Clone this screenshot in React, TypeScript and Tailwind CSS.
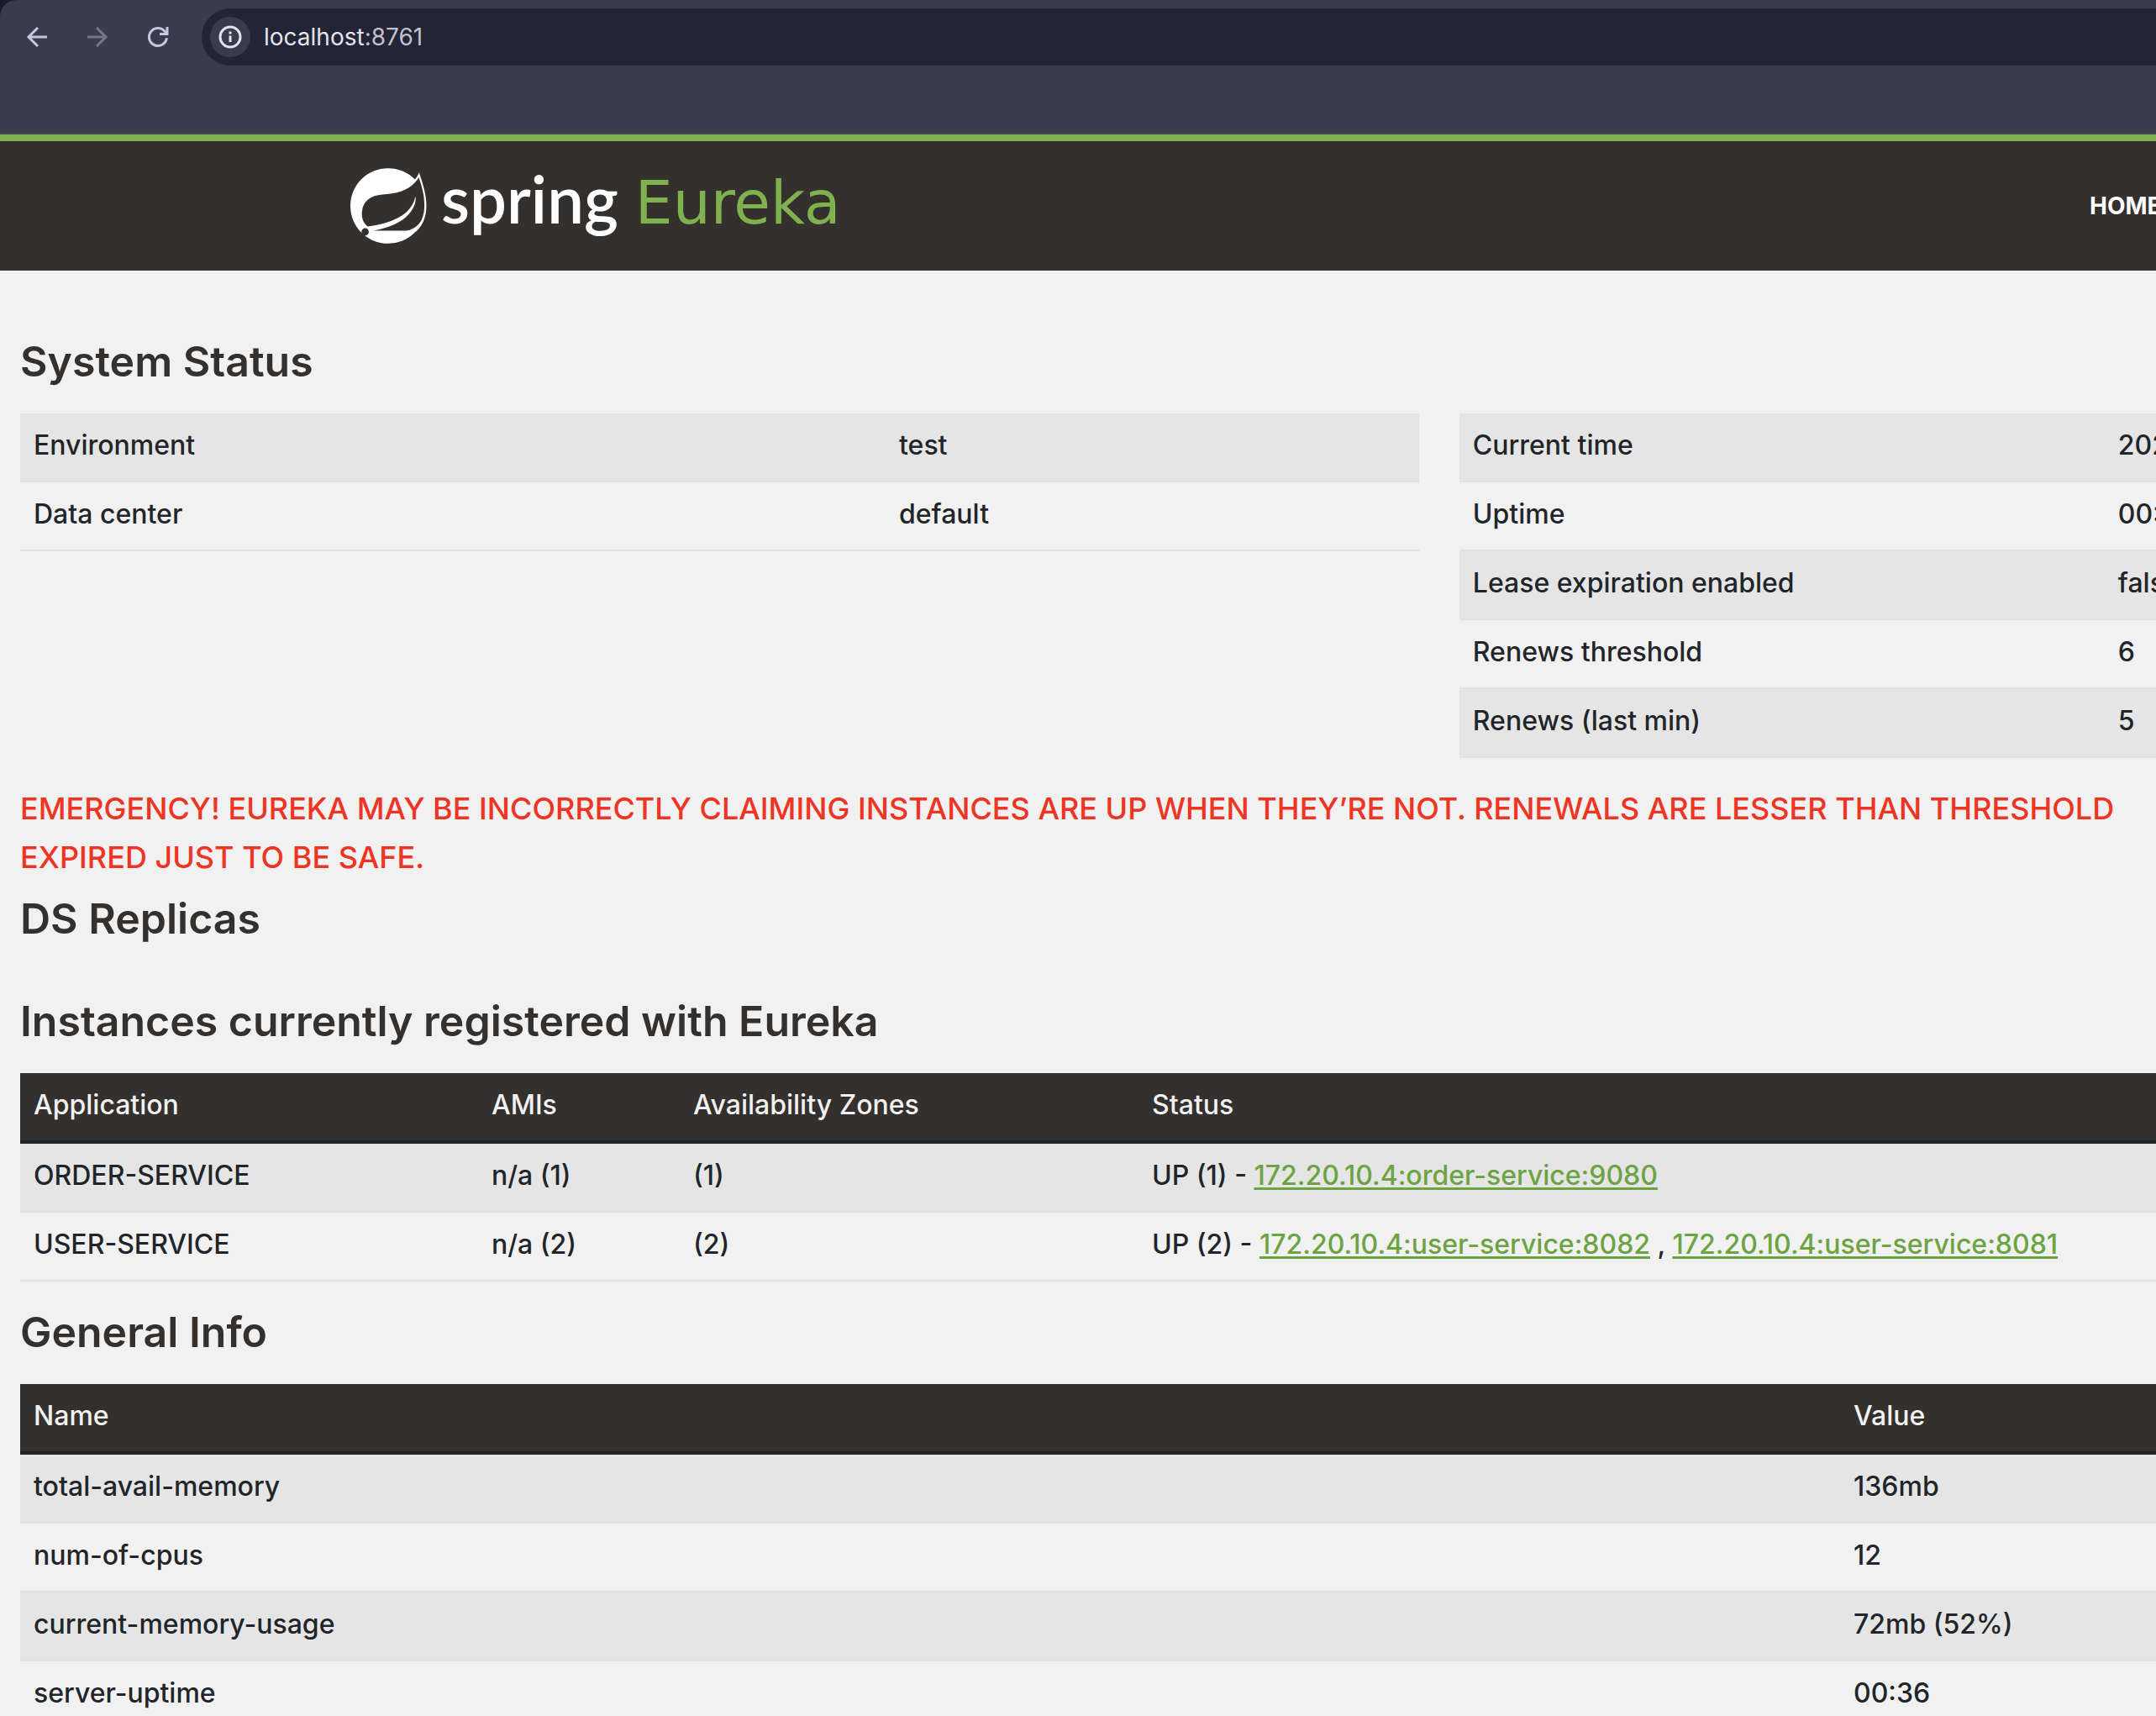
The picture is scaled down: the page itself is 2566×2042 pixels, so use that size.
import type { ReactNode } from 'react';

type Service = { name: string; amis: string; zones: string; status: string; links: string[] };

const ENVIRONMENT: [string, string][] = [
  ['Environment', 'test'],
  ['Data center', 'default'],
];

const RUNTIME: [string, string][] = [
  ['Current time', '2024'],
  ['Uptime', '00:36'],
  ['Lease expiration enabled', 'false'],
  ['Renews threshold', '6'],
  ['Renews (last min)', '5'],
];

const SERVICES: Service[] = [
  { name: 'ORDER-SERVICE', amis: 'n/a (1)', zones: '(1)', status: 'UP (1)', links: ['172.20.10.4:order-service:9080'] },
  {
    name: 'USER-SERVICE',
    amis: 'n/a (2)',
    zones: '(2)',
    status: 'UP (2)',
    links: ['172.20.10.4:user-service:8082', '172.20.10.4:user-service:8081'],
  },
];

const GENERAL: [string, string][] = [
  ['total-avail-memory', '136mb'],
  ['num-of-cpus', '12'],
  ['current-memory-usage', '72mb (52%)'],
  ['server-uptime', '00:36'],
];

function BrowserBar() {
  return (
    <div className="bg-[#1b1a2c]">
      <div className="h-[160px] rounded-tl-[20px] border-b-2 border-[#4a4951] bg-[#3a3b4c] pt-[10px]">
        <div className="flex h-[68px] items-center pl-6">
          <button type="button" aria-label="Back" className="size-10">
            <svg viewBox="24 24 40 40" className="size-10" fill="none" stroke="#c9c4e0" strokeWidth="3">
              <path d="M45 33 34 44 45 55M34 44H56" />
            </svg>
          </button>
          <button type="button" aria-label="Forward" className="ml-8 size-10">
            <svg viewBox="24 24 40 40" className="size-10" fill="none" stroke="#777684" strokeWidth="3">
              <path d="M43 33 54 44 43 55M54 44H32" />
            </svg>
          </button>
          <button type="button" aria-label="Reload" className="ml-8 size-10">
            <svg viewBox="168 24 40 40" className="size-10" fill="none" stroke="#c9c4e0" strokeWidth="3">
              <path d="M198.400 45.300A10.500 10.500 0 1 1 196 37.200L199 40.500" />
              <path d="M199 32V40.500H190" />
            </svg>
          </button>
          <div className="ml-8 flex h-[68px] flex-1 items-center rounded-l-full bg-[#232436] pl-[10px]">
            <button
              type="button"
              aria-label="View site information"
              className="flex size-12 items-center justify-center rounded-full bg-[#3a3b4c]"
            >
              <svg viewBox="0 0 28 28" className="size-7" fill="none" stroke="#e4e3ea" strokeWidth="3">
                <circle cx="14" cy="14" r="12" />
                <path d="M14 12.500V20M14 7.500V10.500" />
              </svg>
            </button>
            <div className="ml-4 text-[28px] leading-9 font-normal text-[#e4e3ea]">
              localhost<span className="text-[#c2c1c9]">:8761</span>
            </div>
          </div>
        </div>
      </div>
    </div>
  );
}

function SpringLeaf() {
  return (
    <svg viewBox="48 24 280 276" className="h-[92px] w-[93px]" aria-hidden="true">
      <circle cx="186" cy="162" r="135" fill="#fff" />
      <path d="M270 80Q290 62 297 42C312 85 326 130 323 170C322 205 308 235 285 255Z" fill="#fff" />
      <path
        d="M113 236C95 222 90 200 93 180C96 145 125 124 165 121C215 120 255 108 283 78Q291 70 296 60C308 95 318 130 316 170C314 210 295 245 250 251L135 251C190 240 235 222 262 190C280 168 288 145 284 128C278 160 255 190 215 208C180 225 145 232 113 236Z"
        fill="#34302d"
      />
      <circle cx="104" cy="255" r="13" fill="#34302d" />
      <path d="M88 262 100 278 106 262Z" fill="#34302d" />
    </svg>
  );
}

function SiteHeader() {
  return (
    <header className="flex h-[162px] items-center justify-between border-t-8 border-[#7fb14f] bg-[#34302d] pl-[416px]">
      <a href="#home" className="flex items-center gap-4" aria-label="Spring Eureka">
        <SpringLeaf />
        <span className="flex items-baseline gap-5 pb-3 leading-[92px]">
          <span className="font-['Lato',sans-serif] text-[78px] font-semibold text-white">spring</span>
          <span className="font-['DejaVu_Sans',sans-serif] text-[71px] font-normal text-[#7fb14f]">Eureka</span>
        </span>
      </a>
      <nav className="w-[79px] whitespace-nowrap">
        <a href="#home" className="block text-[28px] leading-9 font-bold text-white">
          HOME
        </a>
      </nav>
    </header>
  );
}

function Heading({ children }: { children: ReactNode }) {
  return <h1 className="mb-8 text-[50px] leading-[60px] font-semibold text-[#34302d]">{children}</h1>;
}

const ROW = 'border-b-2 border-[#dee2e6] odd:bg-[#e5e5e5]';
const CELL = 'px-4 pt-[14px] pb-[18px]';
const HEAD_ROW = 'border-b-4 border-[#212529] bg-[#34302d] text-left text-[#f1f1f1]';
const HEAD_CELL = 'px-4 pt-[14px] pb-[18px] font-medium';

function PairRows({ rows }: { rows: [string, string][] }) {
  return (
    <tbody>
      {rows.map(([label, value]) => (
        <tr key={label} className={ROW}>
          <td className={CELL}>{label}</td>
          <td className={CELL}>{value}</td>
        </tr>
      ))}
    </tbody>
  );
}

export default function App() {
  return (
    <div className="h-screen overflow-hidden bg-[#f1f1f1] font-['Inter',sans-serif] text-[32px] leading-[48px] font-medium text-[#212529]">
      <BrowserBar />
      <SiteHeader />
      <main className="w-[133.5%] px-6 pt-[78px]">
        <Heading>System Status</Heading>
        <div className="grid grid-cols-2 items-start gap-12">
          <table className="w-full table-fixed border-collapse">
            <colgroup>
              <col className="w-[1030px]" />
              <col />
            </colgroup>
            <PairRows rows={ENVIRONMENT} />
          </table>
          <table className="w-full table-fixed border-collapse">
            <colgroup>
              <col className="w-[768px]" />
              <col />
            </colgroup>
            <PairRows rows={RUNTIME} />
          </table>
        </div>

        <h4 className="mt-[31px] mb-[14px] text-[36px] leading-[58px] whitespace-nowrap text-[#ee3423]">
          EMERGENCY! EUREKA MAY BE INCORRECTLY CLAIMING INSTANCES ARE UP WHEN THEY’RE NOT. RENEWALS ARE LESSER THAN THRESHOLD
          <br />
          EXPIRED JUST TO BE SAFE.
        </h4>

        <Heading>DS Replicas</Heading>
        <div className="pt-[30px]">
          <Heading>Instances currently registered with Eureka</Heading>
        </div>
        <table className="w-full table-fixed border-collapse">
          <colgroup>
            <col className="w-[545px]" />
            <col className="w-[240px]" />
            <col className="w-[546px]" />
            <col />
          </colgroup>
          <thead>
            <tr className={HEAD_ROW}>
              <th className={HEAD_CELL}>Application</th>
              <th className={HEAD_CELL}>AMIs</th>
              <th className={HEAD_CELL}>Availability Zones</th>
              <th className={HEAD_CELL}>Status</th>
            </tr>
          </thead>
          <tbody>
            {SERVICES.map((s) => (
              <tr key={s.name} className={ROW}>
                <td className={CELL}>{s.name}</td>
                <td className={CELL}>{s.amis}</td>
                <td className={CELL}>{s.zones}</td>
                <td className={CELL}>
                  {s.status} -{' '}
                  {s.links.map((link, i) => (
                    <span key={link}>
                      {i > 0 && ' , '}
                      <a
                        href={`#${link}`}
                        className="text-[#6ca343] underline decoration-3 underline-offset-3 [text-decoration-skip-ink:none]"
                      >
                        {link}
                      </a>
                    </span>
                  ))}
                </td>
              </tr>
            ))}
          </tbody>
        </table>

        <div className="pt-[30px]">
          <Heading>General Info</Heading>
        </div>
        <table className="w-full table-fixed border-collapse">
          <colgroup>
            <col className="w-[2166px]" />
            <col />
          </colgroup>
          <thead>
            <tr className={HEAD_ROW}>
              <th className={HEAD_CELL}>Name</th>
              <th className={HEAD_CELL}>Value</th>
            </tr>
          </thead>
          <PairRows rows={GENERAL} />
        </table>
      </main>
    </div>
  );
}
